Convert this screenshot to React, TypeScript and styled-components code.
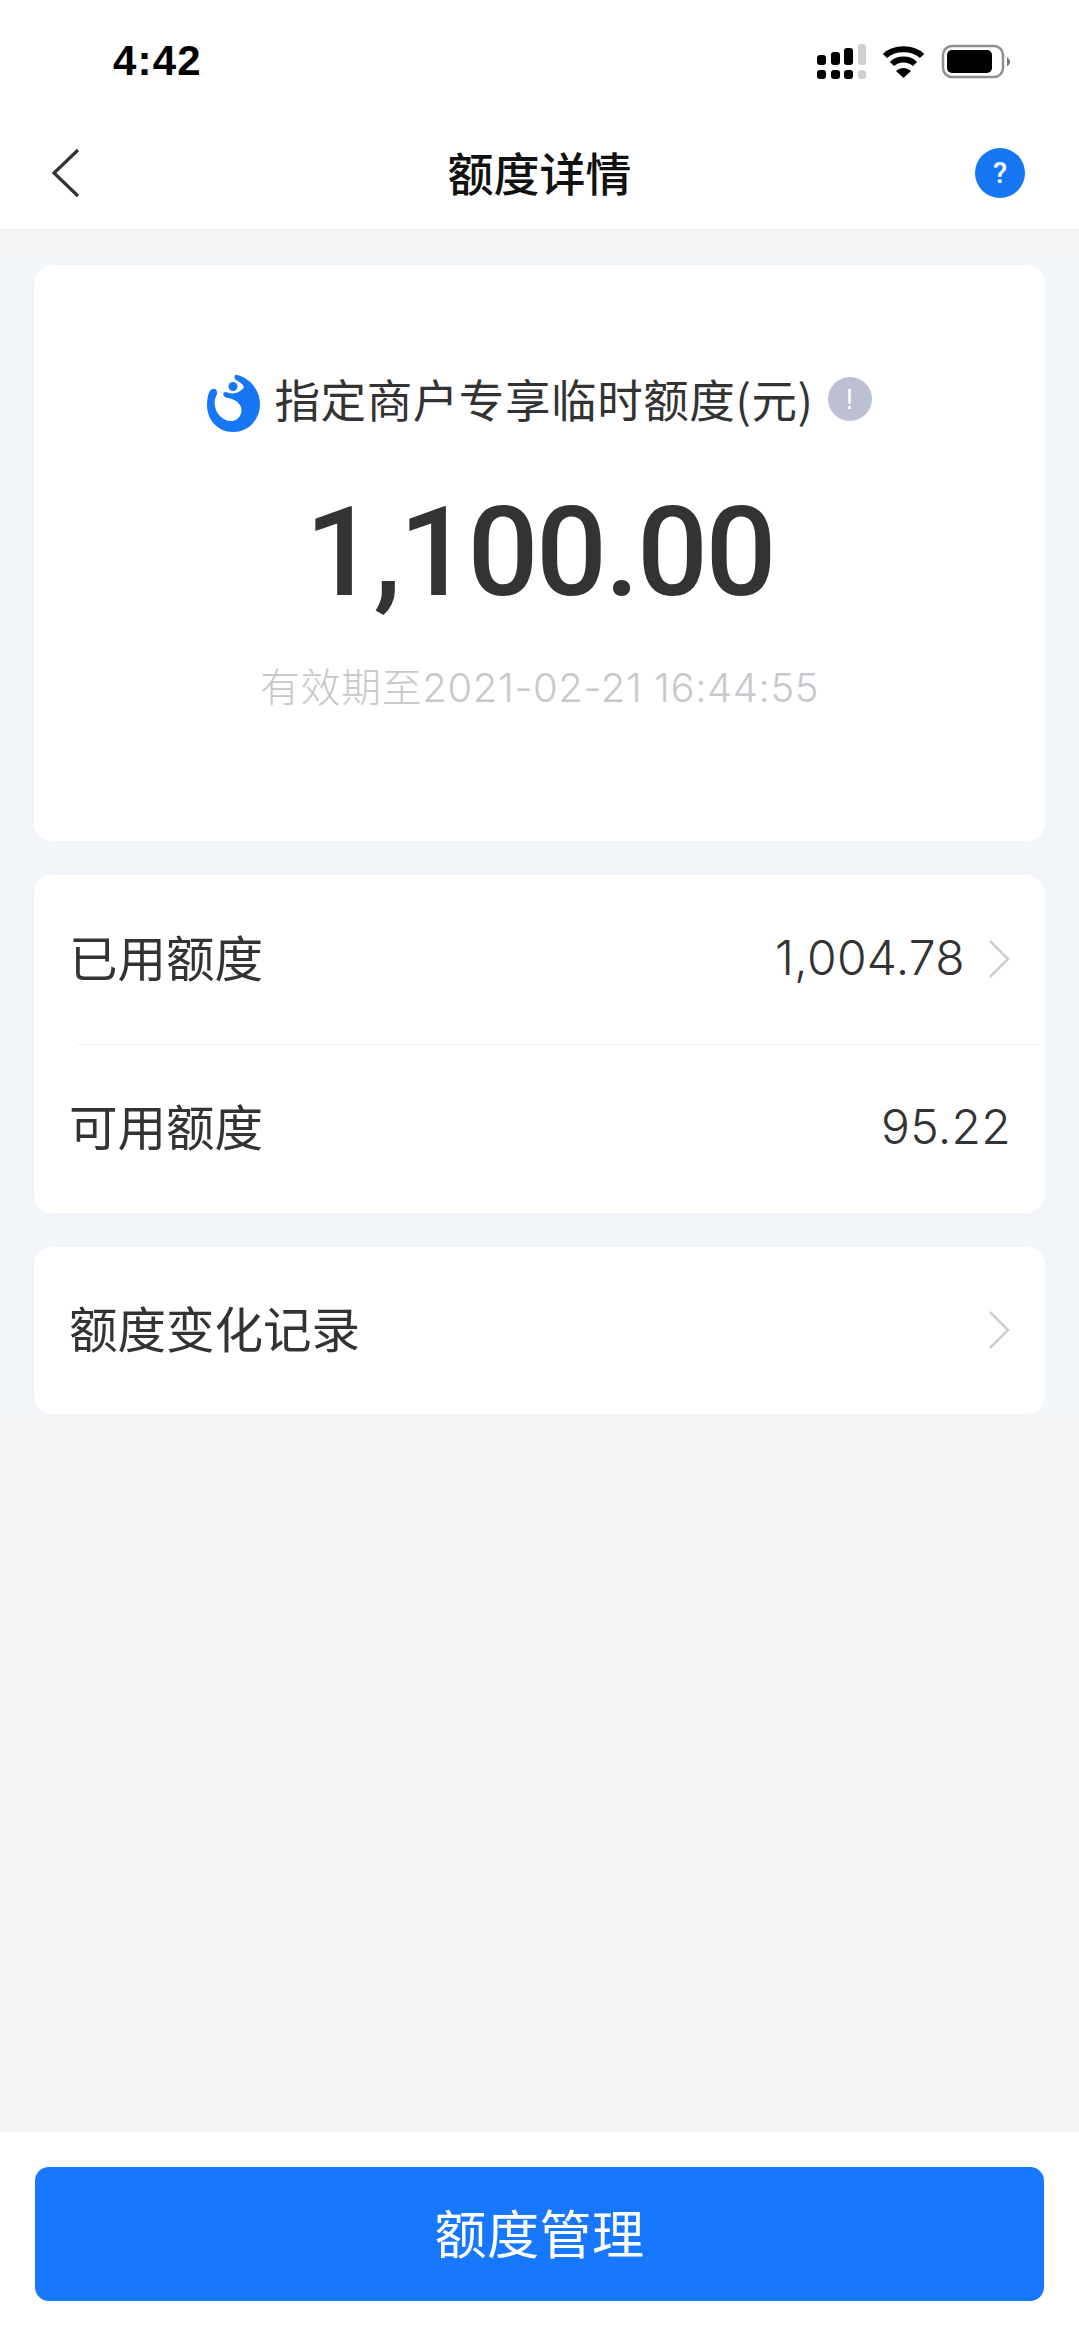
import React from "react";
import styled, { createGlobalStyle } from "styled-components";

const cjk = `"Noto Sans CJK SC", "Noto Sans", sans-serif`;
const latin = `Inter, "Noto Sans CJK SC", sans-serif`;

const Global = createGlobalStyle`
  html, body { margin: 0; padding: 0; background: #fff; }
  * { box-sizing: border-box; }
`;

const Page = styled.div`
  width: 1079px;
  height: 2336px;
  display: flex;
  flex-direction: column;
  background: #f5f5f5;
  font-family: ${cjk};
  overflow: hidden;
`;

const StatusBar = styled.div`
  height: 122px;
  background: #fff;
  display: flex;
  justify-content: space-between;
  padding: 36px 66px 0 113px;
`;

const Time = styled.div`
  font-family: "Liberation Sans", sans-serif;
  font-weight: 700;
  font-size: 42px;
  line-height: 50px;
  letter-spacing: 1.2px;
  color: #000;
`;

const StatusIcons = styled.svg`
  width: 197px;
  height: 40px;
  margin-top: 7px;
  display: block;
`;

const NavBar = styled.div`
  height: 108px;
  background: #fff;
  border-bottom: 1px solid #eeeeef;
  display: flex;
  align-items: center;
  justify-content: space-between;
  padding: 0 54px 6px 50px;
  position: relative;
`;

const NavTitle = styled.div`
  position: absolute;
  left: 0;
  right: 0;
  top: 19px;
  text-align: center;
  font-size: 46px;
  line-height: 60px;
  font-weight: 500;
  color: #111;
`;

const BackIcon = styled.svg`
  width: 32px;
  height: 50px;
  display: block;
`;

const HelpBadge = styled.div`
  width: 50px;
  height: 50px;
  border-radius: 50%;
  background: #1677f5;
  color: #fff;
  display: flex;
  align-items: center;
  justify-content: center;
  font-family: Roboto, sans-serif;
  font-weight: 500;
  font-size: 29px;
`;

const Content = styled.div`
  background: linear-gradient(#f5f5f5 0, #f5f5f5 27px, #f2f5fa 27px, #f2f5fa 100%);
  padding: 35px 34px 0;
  display: flex;
  flex-direction: column;
  gap: 34px;
`;

const Card = styled.div`
  background: #fff;
  border-radius: 18px;
`;

const HeroCard = styled(Card)`
  height: 576px;
  display: flex;
  flex-direction: column;
  align-items: center;
  padding-top: 103px;
`;

const HeroLabelRow = styled.div`
  display: flex;
  align-items: center;
  height: 60px;
`;

const Logo = styled.svg`
  width: 60px;
  height: 60px;
  display: block;
  margin: 7px 11px 0 -4px;
`;

const HeroLabel = styled.div`
  font-size: 45.5px;
  line-height: 60px;
  color: #333;
  letter-spacing: 0.6px;
  white-space: nowrap;
`;

const InfoBadge = styled.div`
  width: 44px;
  height: 44px;
  border-radius: 50%;
  background: #bcc0d2;
  color: #fff;
  margin-left: 14px;
  margin-top: 1px;
  display: flex;
  align-items: center;
  justify-content: center;
  font-family: "Liberation Sans", sans-serif;
  font-size: 30px;
`;

const Amount = styled.div`
  margin-top: 51px;
  font-family: Roboto, sans-serif;
  font-weight: 500;
  font-size: 125px;
  line-height: 148px;
  color: #333;
  letter-spacing: -2.5px;
`;

const Expiry = styled.div`
  margin-top: 34px;
  font-family: ${latin};
  font-weight: 300;
  font-size: 40px;
  line-height: 54px;
  letter-spacing: 0.6px;
  color: #c8c8cc;
  white-space: nowrap;
`;

const Row = styled.div<{ $h: number }>`
  height: ${(p) => p.$h}px;
  display: flex;
  align-items: center;
  justify-content: space-between;
  padding: 0 34px 0 35px;
`;

const Divider = styled.div`
  height: 1px;
  margin-left: 42px;
  margin-right: 4px;
  background: #f3f3f5;
`;

const RowLabel = styled.div`
  font-size: 48.5px;
  line-height: 64px;
  margin-top: -8px;
  color: #333;
`;

const RowRight = styled.div`
  display: flex;
  align-items: center;
  gap: 22px;
`;

const RowValue = styled.div`
  font-family: Inter, sans-serif;
  font-weight: 300;
  font-size: 48px;
  line-height: 64px;
  letter-spacing: 0.3px;
  margin-top: -4px;
  color: #333;
`;

const Chevron = styled.svg`
  width: 24px;
  height: 40px;
  display: block;
  margin-top: -2px;
`;

const Spacer = styled.div`
  flex: 1;
`;

const Footer = styled.div`
  height: 204px;
  background: #fff;
  padding: 35px 35px 0;
`;

const PrimaryButton = styled.button`
  width: 100%;
  height: 134px;
  border: 0;
  border-radius: 14px;
  background: #1777fe;
  color: #fff;
  font-family: ${cjk};
  font-size: 52px;
  letter-spacing: 0.5px;
  padding-bottom: 6px;
`;

const ChevronRight = () => (
  <Chevron viewBox="0 0 24 40">
    <path d="M3 2 L21 20 L3 38" fill="none" stroke="#cfcfd2" strokeWidth="2.6" />
  </Chevron>
);

export default function App() {
  return (
    <Page>
      <Global />
      <StatusBar>
        <Time>4:42</Time>
        <StatusIcons viewBox="0 0 197 40">
          <g fill="#000">
            <rect x="1" y="12" width="9" height="10" rx="3" />
            <rect x="15" y="9" width="9" height="13" rx="3" />
            <rect x="28" y="5" width="9" height="17" rx="3" />
            <rect x="1" y="27" width="9" height="9" rx="3" />
            <rect x="15" y="27" width="9" height="9" rx="3" />
            <rect x="28" y="27" width="9" height="9" rx="3" />
          </g>
          <g fill="#cfcfcf">
            <rect x="42" y="1" width="8" height="21" rx="3" />
            <rect x="42" y="27" width="8" height="9" rx="3" />
          </g>
          <g fill="none" stroke="#000" strokeWidth="6">
            <path d="M69 13 C78 4 97 4 106 13" />
            <path d="M76 21 C82 15 93 15 99 21" />
          </g>
          <path d="M80 28 C85 24 90 24 95 28 L87.5 35 Z" fill="#000" />
          <rect x="127" y="3" width="60" height="31" rx="9" fill="none" stroke="#8f8f8f" strokeWidth="2.5" />
          <rect x="131" y="7" width="45" height="23" rx="5" fill="#000" />
          <path d="M191 14 C193 15 194 17 194 19 C194 21 193 22 191 23 Z" fill="#777" />
        </StatusIcons>
      </StatusBar>
      <NavBar>
        <BackIcon viewBox="0 0 32 50">
          <path d="M28 2 L4 25 L28 48" fill="none" stroke="#333" strokeWidth="3.2" />
        </BackIcon>
        <NavTitle>额度详情</NavTitle>
        <HelpBadge>?</HelpBadge>
      </NavBar>
      <Content>
        <HeroCard>
          <HeroLabelRow>
            <Logo viewBox="13 13 60 60">
              <path
                d="M47 16 C60 19 70 31 70 45 C70 61 58 73 43 73 C28 73 17 61 17 46 C17 40 18 35 20 32 C23 28 28 30 27 35 C25 39 24 43 25 47 C26 55 33 62 41 62 C48 62 53 55 51 48 C49 43 44 40 38 39 C32 38 32 33 36 33 C43 36 50 34 54 28 C52 24 48 22 46 21 C43 18 45 15 47 16 Z"
                fill="#1677f5"
              />
              <circle cx="43" cy="27.5" r="4.5" fill="#1677f5" />
            </Logo>
            <HeroLabel>指定商户专享临时额度(元)</HeroLabel>
            <InfoBadge>!</InfoBadge>
          </HeroLabelRow>
          <Amount>1,100.00</Amount>
          <Expiry>有效期至2021-02-21 16:44:55</Expiry>
        </HeroCard>
        <Card>
          <Row $h={169}>
            <RowLabel>已用额度</RowLabel>
            <RowRight>
              <RowValue>1,004.78</RowValue>
              <ChevronRight />
            </RowRight>
          </Row>
          <Divider />
          <Row $h={168}>
            <RowLabel>可用额度</RowLabel>
            <RowValue>95.22</RowValue>
          </Row>
        </Card>
        <Card>
          <Row $h={167}>
            <RowLabel>额度变化记录</RowLabel>
            <ChevronRight />
          </Row>
        </Card>
      </Content>
      <Spacer />
      <Footer>
        <PrimaryButton>额度管理</PrimaryButton>
      </Footer>
    </Page>
  );
}
